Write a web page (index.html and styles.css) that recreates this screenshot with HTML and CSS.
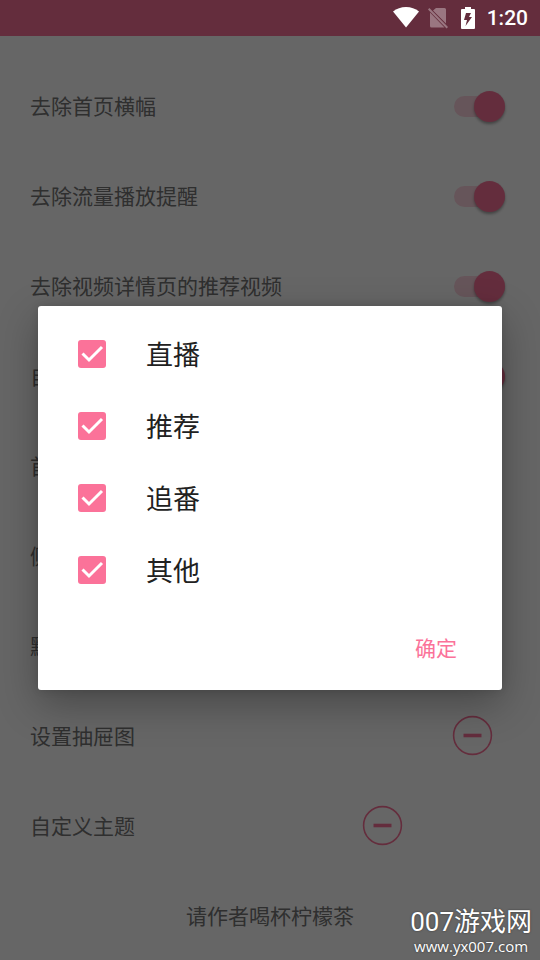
FILE: index.html
```html
<!DOCTYPE html>
<html lang="zh-CN">
<head>
<meta charset="utf-8">
<meta name="viewport" content="width=device-width, initial-scale=1">
<title>设置</title>
<link rel="stylesheet" href="styles.css">
</head>
<body>
<div class="screen">
  <div class="status-backdrop"></div>
  <main class="settings">
    <div class="row"><label class="name" for="s1">去除首页横幅</label><input class="switch" id="s1" type="checkbox" checked></div>
    <div class="row"><label class="name" for="s2">去除流量播放提醒</label><input class="switch" id="s2" type="checkbox" checked></div>
    <div class="row"><label class="name" for="s3">去除视频详情页的推荐视频</label><input class="switch" id="s3" type="checkbox" checked></div>
    <div class="row"><label class="name" for="s4">自</label><input class="switch" id="s4" type="checkbox" checked></div>
    <div class="row"><span class="name">首</span></div>
    <div class="row"><span class="name">侧</span></div>
    <div class="row"><span class="name">默</span></div>
    <div class="row row-drawer"><span class="name" id="drawer">设置抽屉图</span>
      <button class="minus" type="button" aria-labelledby="drawer"><svg viewBox="0 0 40 40"><circle cx="20.500" cy="19.500" r="18.900"/><path d="M11.500 19.500h18"/></svg></button>
    </div>
    <div class="row row-theme"><span class="name" id="theme">自定义主题</span>
      <button class="minus" type="button" aria-labelledby="theme"><svg viewBox="0 0 40 40"><circle cx="20.500" cy="19.500" r="18.900"/><path d="M11.500 19.500h18"/></svg></button>
    </div>
    <div class="row row-center"><span class="name">请作者喝杯柠檬茶</span></div>
  </main>

  <div class="scrim">
    <header class="status">
      <svg class="wifi" viewBox="0 0 26 21"><path d="M13 20.500 0 4.600Q5.500 0 13 0t13 4.600z"/></svg>
      <svg class="sim" viewBox="0 0 20 22"><path d="M8 1h8.500q1.500 0 1.500 1.500v14L5 3.500zM2 5.500l14.500 15H3.500Q2 20.500 2 19z"/><path d="M1.400 1 20 20l-1.400 1.400L0 2.400z"/></svg>
      <svg class="battery" viewBox="0 0 14 22"><path fill-rule="evenodd" d="M4 0h6v2h3q1 0 1 1v18q0 1-1 1H1q-1 0-1-1V3q0-1 1-1h3zM5 6 3 13h3l-1.500 6L11 10H8l2-4z"/></svg>
      <span class="time">1:20</span>
    </header>
    <div class="stage">
      <form class="dialog" role="dialog" aria-label="设置">
        <label class="option"><span class="box"><input type="checkbox" checked><svg viewBox="0 0 28 28"><path d="m4.500 13.500 6.500 6.500L24 7"/></svg></span><span class="name">直播</span></label>
        <label class="option"><span class="box"><input type="checkbox" checked><svg viewBox="0 0 28 28"><path d="m4.500 13.500 6.500 6.500L24 7"/></svg></span><span class="name">推荐</span></label>
        <label class="option"><span class="box"><input type="checkbox" checked><svg viewBox="0 0 28 28"><path d="m4.500 13.500 6.500 6.500L24 7"/></svg></span><span class="name">追番</span></label>
        <label class="option"><span class="box"><input type="checkbox" checked><svg viewBox="0 0 28 28"><path d="m4.500 13.500 6.500 6.500L24 7"/></svg></span><span class="name">其他</span></label>
        <div class="actions"><button class="confirm" type="button"><span class="name">确定</span></button></div>
      </form>
    </div>
  </div>

  <div class="watermark"><span class="brand">007游戏网</span><span class="url">www.yx007.com</span></div>
</div>
</body>
</html>
```
FILE: styles.css
```css
:root {
  --pink: #fb7299;
}

* {
  box-sizing: border-box;
}

body {
  margin: 0;
  background: #fff;
  font-family: Roboto, "Noto Sans CJK SC", sans-serif;
}

.screen {
  position: relative;
  min-height: 100vh;
  overflow: hidden;
}

.status-backdrop {
  height: 36px;
  background: var(--pink);
}

.settings {
  padding-top: 25px;
  color: #757575;
  font-size: 21px;
}

.row {
  display: flex;
  align-items: center;
  justify-content: space-between;
  height: 90px;
  padding: 0 35px 0 30px;
}

.row:last-child {
  height: 89px;
}

.name {
  display: block;
  padding-bottom: 2px;
}

.row-drawer {
  padding-right: 48px;
}

.row-theme {
  padding-right: 138px;
}

.row-center {
  justify-content: center;
  padding: 0 30px;
}

.switch {
  appearance: none;
  display: flex;
  align-items: center;
  justify-content: flex-end;
  width: 51px;
  height: 21px;
  margin: 0;
  border-radius: 11px;
  background: rgba(251, 114, 153, 0.3);
}

.switch::before {
  content: "";
  flex: none;
  width: 31px;
  height: 31px;
  border-radius: 50%;
  background: var(--pink);
  box-shadow: 0 2px 3px rgba(0, 0, 0, 0.35);
}

.minus {
  width: 40px;
  height: 40px;
  padding: 0;
  border: 0;
  background: none;
}

.minus svg {
  display: block;
  overflow: visible;
  fill: none;
  stroke: var(--pink);
  stroke-width: 1.6;
}

.minus path {
  stroke-width: 3.6;
}

.scrim {
  position: absolute;
  inset: 0;
  display: flex;
  flex-direction: column;
  background: rgba(0, 0, 0, 0.6);
}

.status {
  display: flex;
  align-items: center;
  justify-content: flex-end;
  height: 36px;
  padding: 0 12px 1px 0;
  color: #fff;
}

.status svg {
  fill: currentColor;
}

.wifi {
  width: 26px;
  height: 21px;
}

.sim {
  width: 20px;
  height: 22px;
  margin-left: 9px;
  opacity: 0.35;
}

.battery {
  width: 14px;
  height: 22px;
  margin-left: 13px;
}

.time {
  margin-left: 12px;
  padding-top: 1px;
  font-size: 21px;
  font-weight: 500;
}

.stage {
  flex: 1;
  display: flex;
  align-items: center;
  padding: 0 38px;
}

.dialog {
  width: 100%;
  padding-top: 12px;
  border-radius: 3px;
  background: #fff;
  box-shadow: 0 14px 40px rgba(0, 0, 0, 0.3), 0 0 8px rgba(0, 0, 0, 0.12);
}

.option {
  display: flex;
  align-items: center;
  gap: 40px;
  height: 72px;
  padding: 0 40px;
  color: #212121;
  font-size: 27px;
}

.box {
  display: grid;
  width: 28px;
  height: 28px;
}

.box > * {
  grid-area: 1 / 1;
}

.box input {
  appearance: none;
  width: 28px;
  height: 28px;
  margin: 0;
  border-radius: 3px;
  background: var(--pink);
}

.box svg {
  fill: none;
  stroke: #fff;
  stroke-width: 3;
  pointer-events: none;
}

.actions {
  display: flex;
  align-items: center;
  justify-content: flex-end;
  height: 84px;
  padding-right: 24px;
}

.confirm {
  height: 54px;
  padding: 0 21px;
  border: 0;
  background: none;
  color: var(--pink);
  font: inherit;
  font-size: 21px;
}

.watermark {
  position: absolute;
  right: 8px;
  bottom: 5px;
  display: flex;
  flex-direction: column;
  align-items: center;
  color: #fff;
  text-shadow: 0 0 2px #333;
}

.brand {
  font-size: 26px;
  line-height: 30px;
}

.url {
  font-family: "Open Sans", sans-serif;
  font-size: 15px;
  line-height: 18px;
}
```
